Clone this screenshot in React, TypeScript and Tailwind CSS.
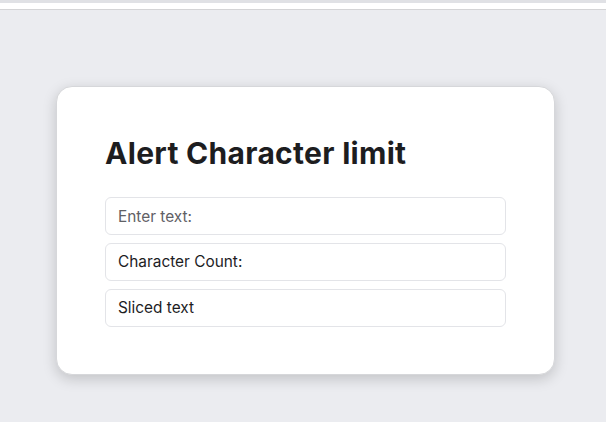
import React from "react";

export default function App() {
  return (
    <div className="w-[606px] h-[422px] bg-[#ebecf0] flex flex-col" style={{ fontFamily: "Inter, 'Noto Sans', sans-serif" }}>
      <div className="h-[3px] bg-[#e0e1e5]" />
      <div className="h-[7px] bg-white border-b border-[#d4d4d6]" />
      <div className="flex-1 flex pl-[56px] pt-[76px]">
        <div className="w-[499px] h-[289px] bg-white rounded-[16px] shadow-[0_4px_14px_rgba(0,0,0,0.18)] border border-[#d6d7da] px-[48px] pt-[48px]">
          <h1 className="text-[30px] leading-[36px] font-bold text-[#1d1d1f] tracking-[0.3px]">Alert Character limit</h1>
          <div className="mt-[26px] flex flex-col gap-[8px]">
            <input
              placeholder="Enter text:"
              className="h-[38px] w-full rounded-[6px] border border-[#e3e4e8] px-[12px] text-[15.4px] text-[#1d1d1f] placeholder:text-[#5f6065] outline-none"
            />
            <div className="h-[38px] w-full rounded-[6px] border border-[#e3e4e8] px-[12px] text-[15.4px] text-[#1d1d1f] flex items-center">Character Count:</div>
            <div className="h-[38px] w-full rounded-[6px] border border-[#e3e4e8] px-[12px] text-[15.4px] text-[#1d1d1f] flex items-center">Sliced text</div>
          </div>
        </div>
      </div>
    </div>
  );
}
